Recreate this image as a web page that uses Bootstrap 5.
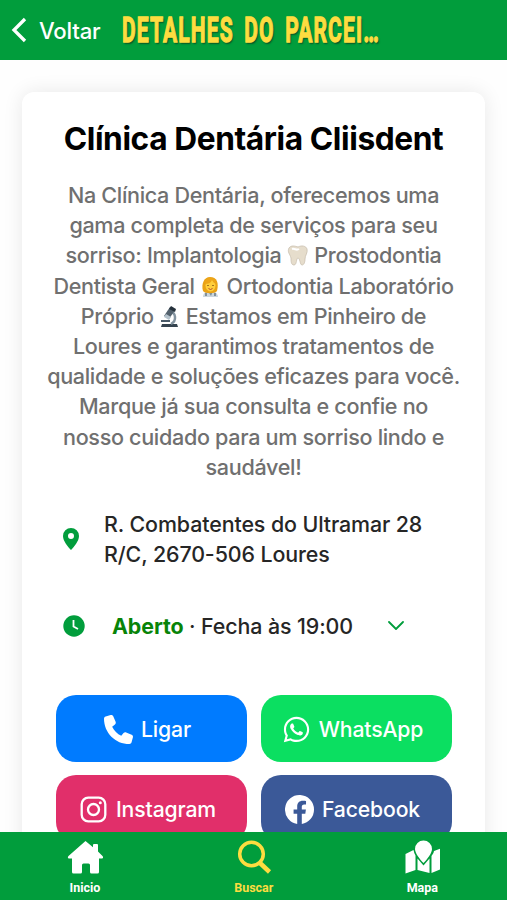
<!DOCTYPE html>
<html lang="pt">
<head>
<meta charset="utf-8">
<meta name="viewport" content="width=device-width, initial-scale=1">
<title>Detalhes do Parceiro</title>
<link href="https://cdn.jsdelivr.net/npm/bootstrap@5.3.0/dist/css/bootstrap.min.css" rel="stylesheet">
<style>
  body { font-family: Inter, "Liberation Sans", sans-serif; height: 100vh; overflow: hidden; background: #fefefe; }
  svg { display: block; flex: none; }
  main { height: calc(100vh - 60px); overflow: hidden; }
  .topbar { height: 60px; background: #019d3c; padding-left: 11px; }
  .back-label { font-size: 22.2px; font-weight: 500; margin-left: 12px; width: 83px; letter-spacing: -.2px; line-height: 60px; padding-top: 2px; }
  .page-title { font: 700 35px/60px Roboto, sans-serif; color: #fddc40; white-space: nowrap; word-spacing: 7px; letter-spacing: 1.9px; -webkit-text-stroke: 1.3px #fddc40; text-shadow: 2px 2px 2px #0a5a25; transform: scaleX(.6); transform-origin: left; width: 258px; padding-top: 1px; }
  .partner { margin: 32px 22px 0; border-radius: 12px; box-shadow: 0 0 20px rgba(0,0,0,.09); height: 820px; }
  .partner-name { font-size: 31.7px; font-weight: 700; line-height: 38px; margin: 28px 0 0; letter-spacing: -.41px; white-space: nowrap; color: #000; }
  .about { font-size: 21.6px; line-height: 30.2px; color: #707070; margin: 22px 0 0; white-space: nowrap; letter-spacing: -.33px; font-weight: 450; }
  .about svg { display: inline-block; vertical-align: -3px; }
  .info { font-size: 21.4px; line-height: 30px; color: #262626; white-space: nowrap; letter-spacing: -.1px; font-weight: 450; }
  .address { margin-top: 27px; padding-left: 41px; gap: 25px; }
  .hours { margin-top: 42px; padding-left: 41px; }
  .hours-text { margin-left: 27px; width: 241px; }
  .chevron { margin-left: 35px; }
  .open { color: #088408; font-weight: 700; }
  .actions { padding: 54px 33px 0 34px; display: grid; grid-template-columns: 191px 191px; gap: 13px 14px; }
  .action { height: 67px; border-radius: 20px; color: #fff; font-size: 21.2px; font-weight: 500; letter-spacing: -.15px; border: 0; padding: 2px 8px 0 0; }
  .call { background: #007bff; } .whats { background: #0bdf61; } .insta { background: #e12f6a; } .face { background: #3b5998; }
  .bottombar { height: 68px; background: #019d3c; }
  .tab { font: 700 12.5px/14px Roboto, sans-serif; color: #fff; padding-top: 7px; }
  .tab span { margin-top: 6px; }
  .tab.active { color: #fddc40; }
</style>
<script src="https://cdn.jsdelivr.net/npm/bootstrap@5.3.0/dist/js/bootstrap.bundle.min.js"></script>
</head>
<body>
<header class="topbar d-flex align-items-center text-white">
  <svg width="16" height="26" viewBox="0 0 16 26" fill="none" stroke="#fff" stroke-width="3.3"><path d="M14 2 3 13l11 11"/></svg>
  <span class="back-label">Voltar</span>
  <h1 class="page-title m-0">DETALHES DO PARCEI…</h1>
</header>

<main>
  <section class="partner bg-white">
    <div class="d-flex flex-column">
      <h2 class="partner-name text-center">Clínica Dentária Cliisdent</h2>
      <p class="about text-center">Na Clínica Dentária, oferecemos uma<br>gama completa de serviços para seu<br>sorriso: Implantologia <svg width="22" height="21" viewBox="0 0 22 21"><path d="M2 3C4 0 8 1 11 2c4-2 8-1 9 2 1 4-2 6-2 10 0 3-1 6-3 6s-2-7-4-7-1 7-4 7-3-4-3-7C3 9 0 7 2 3Z" fill="#e6ddcc" stroke="#c9bfae" stroke-width=".8"/><path d="M5 4c3-1 4 2 7 0" stroke="#fff" stroke-width="2" fill="none"/></svg> Prostodontia<br>Dentista Geral <svg width="21" height="21" viewBox="0 0 21 21"><path d="M3 21c0-4 3-6 7-6s8 2 8 6" fill="#ccd6dd"/><path d="M8 15h5l-2 5Z" fill="#79909d"/><path d="M3 15C1 8 4 1 10 1c7 0 9 6 7 14-2 3-12 3-14 0Z" fill="#eaa316"/><ellipse cx="10.500" cy="9.500" rx="5" ry="6" fill="#ffce3d"/><path d="M5 8c3 0 6-1 7-4 1 2 2 3 4 4 0-4-2-6-6-6S5 4 5 8Z" fill="#eda51a"/><path d="M8 9v1m5-1v1" stroke="#704910" stroke-width="1.300"/><path d="M8.500 12.500q2 2 4 0" stroke="#b34932" fill="none"/><path d="M6 17v3m9-3v3" stroke="#5c6c78" stroke-width="1.300"/></svg> Ortodontia Laboratório<br>Próprio <svg width="21" height="21" viewBox="0 0 21 21"><path d="M3 18h15l1 3H2Z" fill="#35434f"/><path d="M11 6c6 0 7 9 1 12" fill="none" stroke="#8494a0" stroke-width="2.500"/><path d="m11 1 5 3-6 9-5-3Z" fill="#53616d"/><path d="m12 0 5 3-1 3-6-3Z" fill="#25313b"/><path d="m7 8 5 3-2 3-5-3Z" fill="#b4c2cc"/><path d="M2 14h9v2H2Z" fill="#4a5b69"/></svg> Estamos em Pinheiro de<br>Loures e garantimos tratamentos de<br>qualidade e soluções eficazes para você.<br>Marque já sua consulta e confie no<br>nosso cuidado para um sorriso lindo e<br>saudável!</p>

      <div class="info address d-flex align-items-center">
        <svg width="16" height="22" viewBox="0 0 16 22"><path fill="#019d3c" fill-rule="evenodd" d="M8 0a8 8 0 0 0-8 8c0 5 5 11 8 14 3-3 8-9 8-14a8 8 0 0 0-8-8Zm0 5a3 3 0 1 1 0 6 3 3 0 0 1 0-6Z"/></svg>
        <div>R. Combatentes do Ultramar 28<br>R/C, 2670-506 Loures</div>
      </div>

      <div class="info hours d-flex align-items-center">
        <svg width="22" height="22" viewBox="0 0 22 22"><circle cx="11" cy="11" r="10.700" fill="#019d3c"/><path d="M10.500 5v6.500L15 14" fill="none" stroke="#fff" stroke-width="1.800"/></svg>
        <div class="hours-text"><span class="open">Aberto</span> · Fecha às 19:00</div>
        <svg class="chevron" width="16" height="10" viewBox="0 0 16 10" fill="none" stroke="#019d3c" stroke-width="1.800" stroke-linecap="round" stroke-linejoin="round"><path d="m1 1 7 7 7-7"/></svg>
      </div>

      <div class="actions">
        <button class="btn action call d-flex align-items-center justify-content-center gap-2"><svg width="29" height="29" viewBox="0 0 512 512" fill="#fff"><path d="M164.900 24.600c-7.700-18.600-28-28.500-47.400-23.200l-88 24C12.100 30.200 0 46 0 64c0 247.400 200.600 448 448 448 18 0 33.800-12.100 38.600-29.500l24-88c5.300-19.400-4.600-39.700-23.200-47.400l-96-40c-16.300-6.800-35.200-2.100-46.300 11.600L304.700 368C234.300 334.700 177.300 277.700 144 207.300L193.300 167c13.700-11.200 18.400-30 11.600-46.300l-40-96Z"/></svg>Ligar</button>
        <button class="btn action whats d-flex align-items-center justify-content-center gap-2"><svg width="29" height="29" viewBox="0 0 448 512" fill="#fff"><path d="M380.900 97.100C339 55.100 283.200 32 223.900 32c-122.400 0-222 99.600-222 222 0 39.100 10.200 77.300 29.600 111L0 480l117.700-30.900c32.400 17.700 68.900 27 106.100 27h.1c122.300 0 224.100-99.600 224.100-222 0-59.300-25.200-115-67.100-157ZM223.900 438.700c-33.200 0-65.700-8.900-94-25.700l-6.700-4-69.800 18.300L72 359.200l-4.400-7c-18.500-29.400-28.200-63.300-28.200-98.200 0-101.700 82.800-184.500 184.600-184.500 49.300 0 95.600 19.200 130.400 54.100 34.800 34.900 56.200 81.200 56.100 130.500 0 101.800-84.900 184.600-186.600 184.600Zm101.200-138.200c-5.500-2.800-32.800-16.200-37.900-18-5.100-1.900-8.800-2.800-12.500 2.800s-14.300 18-17.600 21.800c-3.200 3.700-6.500 4.200-12 1.400-32.600-16.300-54-29.100-75.500-66-5.700-9.800 5.700-9.100 16.300-30.300 1.800-3.700.9-6.900-.5-9.700s-12.500-30.100-17.100-41.200c-4.500-10.800-9.100-9.300-12.500-9.500-3.200-.2-6.900-.2-10.600-.2s-9.700 1.400-14.800 6.900c-5.100 5.600-19.400 19-19.400 46.300s19.900 53.700 22.600 57.400c2.800 3.700 39.100 59.700 94.800 83.800 35.200 15.200 49 16.500 66.600 13.900 10.700-1.600 32.800-13.400 37.400-26.400s4.600-24.100 3.200-26.400c-1.300-2.500-5-3.900-10.500-6.600Z"/></svg>WhatsApp</button>
        <button class="btn action insta d-flex align-items-center justify-content-center gap-2"><svg width="29" height="29" viewBox="0 0 29 29" fill="none" stroke="#fff" stroke-width="2.300"><rect x="2.700" y="2.700" width="23.600" height="23.600" rx="6.500"/><circle cx="14.500" cy="14.500" r="5.500"/><circle cx="21.300" cy="7.800" r="1.500" fill="#fff" stroke="none"/></svg>Instagram</button>
        <button class="btn action face d-flex align-items-center justify-content-center gap-2"><svg width="29" height="29" viewBox="0 0 24 24" fill="#fff"><path d="M24 12a12 12 0 1 0-13.900 11.900v-8.400H7.100V12h3V9.400c0-3 1.800-4.700 4.600-4.700 1.300 0 2.700.2 2.700.2v3h-1.500c-1.500 0-2 .9-2 1.900V12h3.400l-.5 3.500h-2.900v8.400A12 12 0 0 0 24 12Z"/></svg>Facebook</button>
      </div>
    </div>
  </section>
</main>

<nav class="bottombar fixed-bottom d-flex">
  <div class="tab d-flex flex-column align-items-center" style="width:33.5%"><svg width="36" height="36" viewBox="0 0 36 36" fill="#fff"><path d="M18.500 2 1.500 17q-1.500 2 .5 2.500h3V33q0 1.500 1.500 1.500h7q1.500 0 1.500-1.500v-7q0-1.500 1.500-1.500h5q1.500 0 1.500 1.500v7q0 1.500 1.500 1.500h6q1.500 0 1.500-1.500V19.500h3q2-.5.500-2.500L31 12.500V6q0-1-1-1h-3q-1 0-1 1v2.300Z"/></svg><span>Inicio</span></div>
  <div class="tab active d-flex flex-column align-items-center" style="width:33.1%"><svg width="36" height="36" viewBox="0 0 36 36" fill="none" stroke="#fddc40"><circle cx="15.500" cy="15" r="11.800" stroke-width="3.500"/><path d="m24 24 9.500 9" stroke-width="4.500"/></svg><span>Buscar</span></div>
  <div class="tab d-flex flex-column align-items-center" style="width:33.4%"><svg width="36" height="36" viewBox="-1.500 0 36 36" fill="#fff"><path d="M18 1.500a8.500 8.500 0 0 0-8.500 8.500c0 4 4.500 10 8.500 14 4-4 8.500-10 8.500-14A8.500 8.500 0 0 0 18 1.500ZM0 15l8-4q.5 3 2 5.500V31L0 34.500ZM12 19.500l6 7 6-7V34l-12-3ZM26 17q2.500-3 2.500-5l7-2.500V30L26 34Z"/></svg><span>Mapa</span></div>
</nav>
</body>
</html>
